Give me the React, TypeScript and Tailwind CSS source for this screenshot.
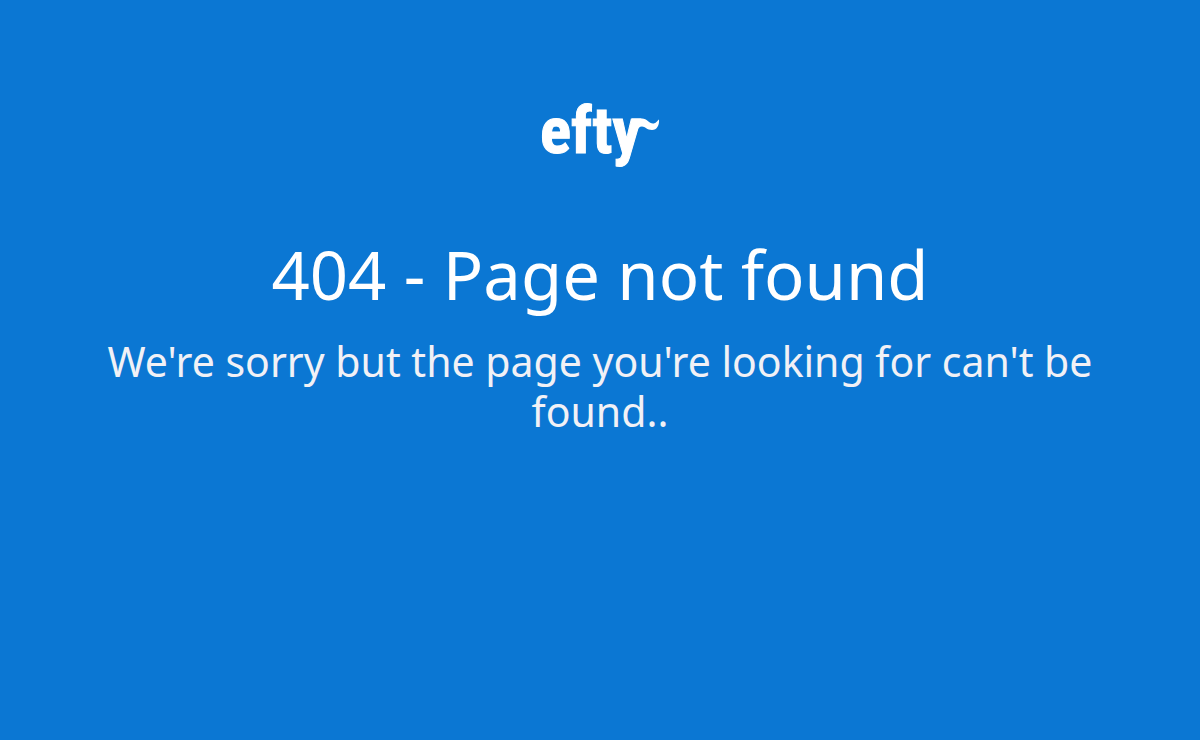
function EftyLogo() {
  return (
    <svg width="120" height="64" viewBox="0 0 120 64" role="img" aria-label="efty" className="overflow-visible">
      <text
        x="0"
        y="50"
        fill="#fff"
        stroke="#fff"
        strokeWidth="1"
        fontSize="65"
        fontWeight="700"
        fontFamily="'Roboto Condensed', 'Roboto', sans-serif"
      >
        efty
      </text>
      <path
        fill="#fff"
        d="M92 15.500 H102 C107 15.500 109 20.500 113 20.500 C116 20.500 117 18 119 16.500 C119.500 22 117 27 112 27 C107 27 105 23.500 102 23.500 C99.500 23.500 98 25 97 28 L90 28 Z"
      />
    </svg>
  );
}

export default function App() {
  return (
    <main className="flex min-h-screen flex-col items-center bg-[#0b77d3] px-24 pt-[103px] text-center font-['Noto_Sans','Open_Sans',sans-serif]">
      <EftyLogo />
      <h1 className="mt-[67px] text-[67px] leading-[80px] text-white">404 - Page not found</h1>
      <p className="mt-[22px] text-[41px] leading-[50px] text-[#f1f1f6]">
        We're sorry but the page you're looking for can't be found..
      </p>
    </main>
  );
}
